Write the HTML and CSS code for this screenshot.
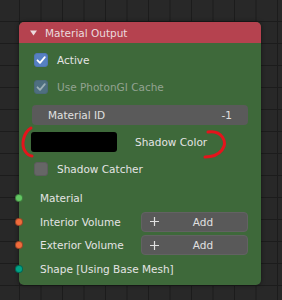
FILE: index.html
```html
<!DOCTYPE html>
<html lang="en">
<head>
  <meta charset="UTF-8">
  <title>Material Output</title>
  <link rel="stylesheet" href="styles.css">
</head>
<body>
  <div class="node">
    <div class="node-header">
      <svg class="collapse" width="7" height="6" viewBox="0 0 7 6"><polygon points="0,0.5 7,0.5 3.5,5.5" /></svg>
      <span>Material Output</span>
    </div>
    <div class="node-body">
      <div class="props">
        <div class="row">
          <span class="checkbox checked"><svg width="14" height="14" viewBox="0 0 14 14"><path d="M3.5 7.3 L6 9.8 L10.8 4.2" /></svg></span>
          <span class="label">Active</span>
        </div>
        <div class="row disabled">
          <span class="checkbox checked"><svg width="14" height="14" viewBox="0 0 14 14"><path d="M3.5 7.3 L6 9.8 L10.8 4.2" /></svg></span>
          <span class="label">Use PhotonGI Cache</span>
        </div>
        <div class="row">
          <div class="field">
            <span>Material ID</span>
            <span>-1</span>
          </div>
        </div>
        <div class="row">
          <div class="swatch"></div>
          <span class="swatch-label">Shadow Color</span>
        </div>
        <div class="row">
          <span class="checkbox"></span>
          <span class="label">Shadow Catcher</span>
        </div>
      </div>
      <div class="sockets">
        <div class="row socket-row">
          <span class="socket shader"></span>
          <span class="socket-label">Material</span>
        </div>
        <div class="row socket-row">
          <span class="socket volume"></span>
          <span class="socket-label fixed">Interior Volume</span>
          <div class="add-btn">
            <svg width="9" height="9" viewBox="0 0 9 9"><path d="M4.5 0 V9 M0 4.5 H9" /></svg>
            <span>Add</span>
          </div>
        </div>
        <div class="row socket-row">
          <span class="socket volume"></span>
          <span class="socket-label fixed">Exterior Volume</span>
          <div class="add-btn">
            <svg width="9" height="9" viewBox="0 0 9 9"><path d="M4.5 0 V9 M0 4.5 H9" /></svg>
            <span>Add</span>
          </div>
        </div>
        <div class="row socket-row">
          <span class="socket shape"></span>
          <span class="socket-label">Shape [Using Base Mesh]</span>
        </div>
      </div>
    </div>
  </div>
  <!-- hand-drawn marks around the shadow colour row -->
  <svg class="marks" width="282" height="300" viewBox="0 0 282 300">
    <path d="M31 128 C23 133 21 145 25 151 C27 154 29 156 32 156" />
    <path d="M208 132 C222 130 228 142 222 150 C218 155 212 157 205 157" />
  </svg>
</body>
</html>
```

FILE: styles.css
```css
body {
  margin: 0;
  padding: 22px 21px 0 19px;
  height: 300px;
  box-sizing: border-box;
  font-family: "DejaVu Sans", sans-serif;
  font-size: 10.5px;
  color: #e4e4e4;
  background-color: #282828;
  background-image:
    linear-gradient(to right, #1c1c1c 1px, transparent 1px),
    linear-gradient(to bottom, #1c1c1c 1px, transparent 1px);
  background-size: 21.5px 22px;
  background-position: 19px 21px;
  overflow: hidden;
}
.node {
  position: relative;
  width: 242px;
  background: #3e693a;
  border-radius: 5px;
  box-shadow: 0 0 4px rgba(0, 0, 0, 0.5);
}
.node-header {
  height: 21px;
  display: flex;
  align-items: center;
  gap: 8px;
  padding-left: 11px;
  background: #b5424f;
  border-radius: 5px 5px 0 0;
  color: #ebdadd;
}
.collapse polygon {
  fill: #ebdadd;
}
.node-body {
  padding: 7px 13px 6px 13px;
}
.props {
  display: flex;
  flex-direction: column;
  gap: 7.3px;
}
.sockets {
  display: flex;
  flex-direction: column;
  gap: 3.5px;
  margin-top: 9px;
}
.row {
  height: 20px;
  display: flex;
  align-items: center;
  white-space: nowrap;
}
.checkbox {
  width: 14px;
  height: 14px;
  margin-left: 2px;
  margin-right: 9px;
  border-radius: 3px;
  background: #666;
  box-sizing: border-box;
  border: 1px solid #5c5c5c;
}
.checkbox.checked {
  background: #5680c2;
  border-color: #5077b5;
}
.checkbox svg {
  display: block;
  margin: -1px;
}
.checkbox path {
  fill: none;
  stroke: #fff;
  stroke-width: 1.8;
  stroke-linecap: round;
  stroke-linejoin: round;
}
.disabled .checkbox.checked {
  background: #4e6f80;
  border-color: #4a6878;
}
.disabled .checkbox path {
  stroke: #9cb0b6;
}
.disabled .label {
  color: #93a391;
}
.field {
  flex: 1;
  height: 20px;
  display: flex;
  align-items: center;
  justify-content: space-between;
  padding: 0 16px;
  border-radius: 4px;
  background: #5a5a5a;
  color: #e0e0e0;
}
.swatch {
  width: 86px;
  height: 20px;
  margin-left: -1px;
  border-radius: 3px;
  background: #000;
}
.swatch-label {
  margin-left: 18px;
}
.socket-row {
  position: relative;
}
.socket {
  position: absolute;
  left: -17.5px;
  top: 6px;
  width: 8px;
  height: 8px;
  border-radius: 50%;
  box-sizing: border-box;
  border: 1px solid rgba(0, 0, 0, 0.35);
}
.socket.shader {
  background: #63c763;
}
.socket.volume {
  background: #f06c3c;
}
.socket.shape {
  background: #00a386;
}
.socket-label {
  margin-left: 8px;
}
.socket-label.fixed {
  width: 101px;
  flex-shrink: 0;
}
.add-btn {
  flex: 1;
  height: 20px;
  display: flex;
  align-items: center;
  padding-left: 8px;
  border-radius: 4px;
  background: #595959;
  box-sizing: border-box;
  border: 1px solid #626262;
  color: #e0e0e0;
}
.add-btn path {
  stroke: #e0e0e0;
  stroke-width: 1.2;
}
.add-btn span {
  flex: 1;
  text-align: center;
}
.marks {
  position: absolute;
  left: 0;
  top: 0;
  pointer-events: none;
}
.marks path {
  fill: none;
  stroke: #e5141c;
  stroke-width: 3;
  stroke-linecap: round;
}
```
